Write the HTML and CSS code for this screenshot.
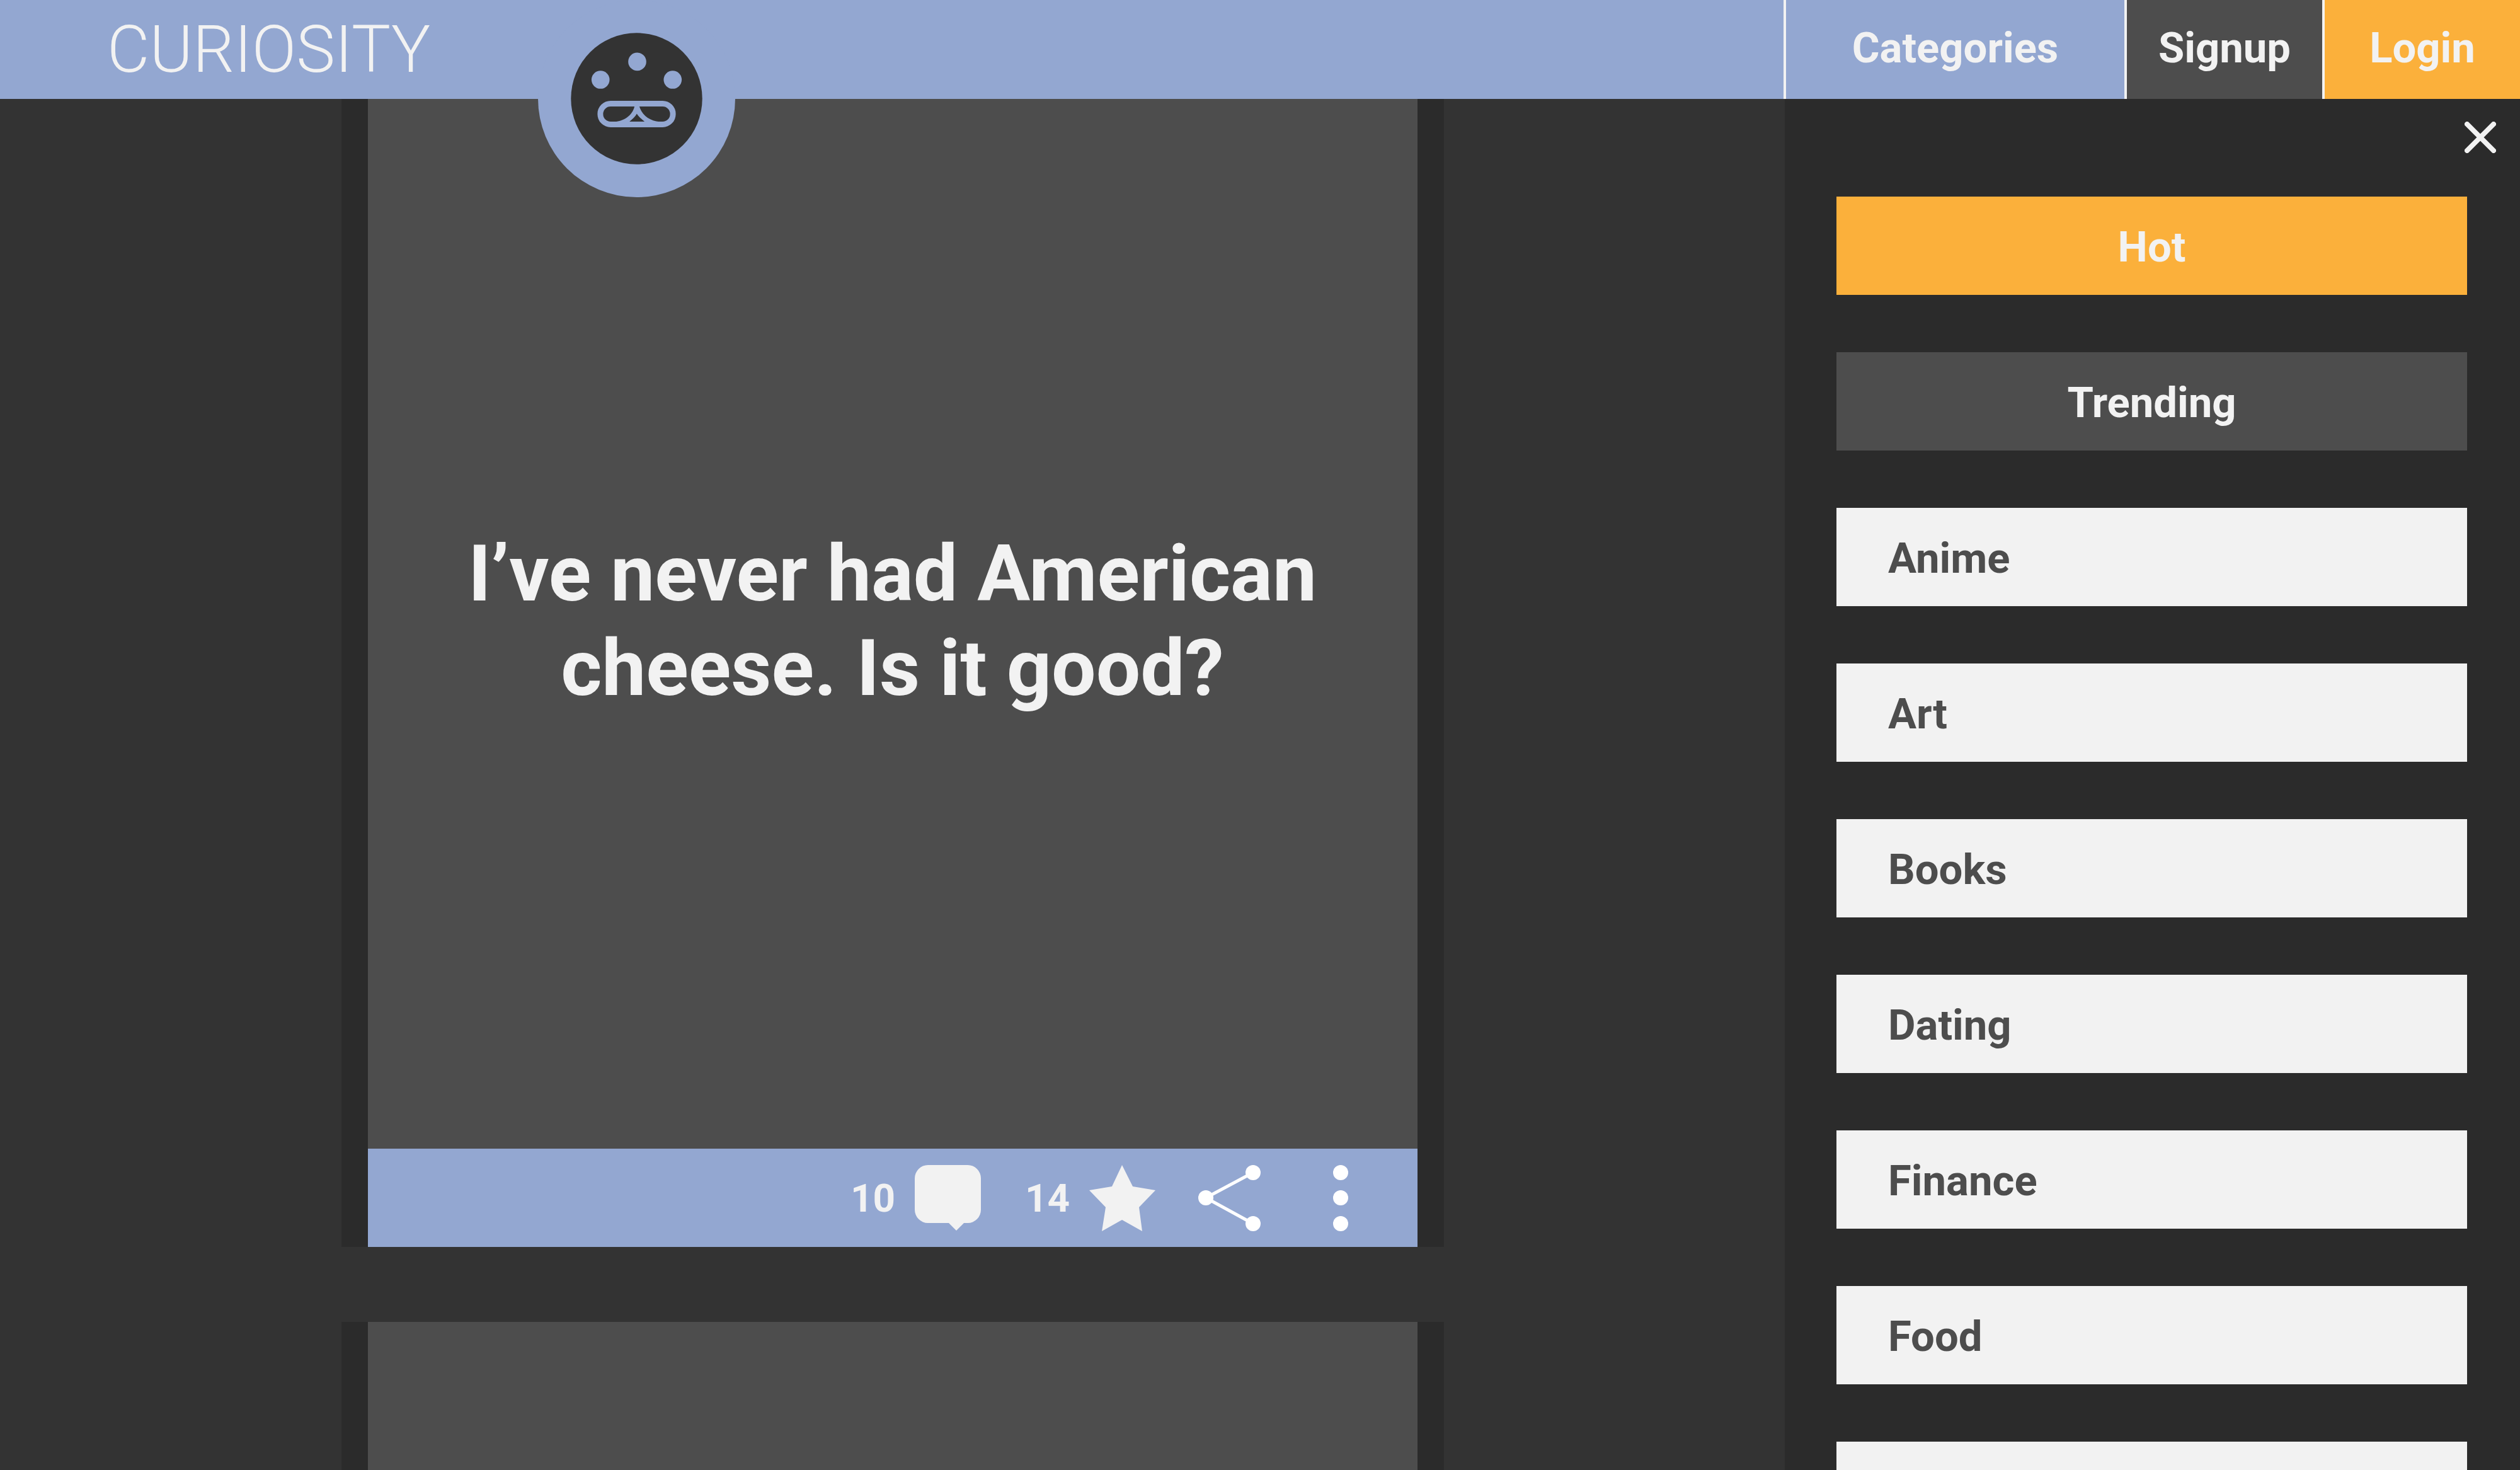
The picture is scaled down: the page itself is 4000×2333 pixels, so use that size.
FILE: index.html
```html
<!DOCTYPE html>
<html lang="en">
<head>
  <meta charset="utf-8">
  <meta name="viewport" content="width=device-width, initial-scale=1">
  <title>Curiosity</title>
  <link rel="stylesheet" href="styles.css">
</head>
<body>
  <header class="topbar">
    <a class="brand" href="#">CURIOSITY</a>
    <a class="mascot" href="#" aria-label="Home">
      <svg class="mascot-art" viewBox="101 -61 940 940" aria-hidden="true">
        <circle cx="571" cy="409" r="470" fill="#93a7d1"/>
        <circle cx="571" cy="409" r="313" fill="#333"/>
        <g fill="#93a7d1">
          <circle cx="574" cy="233" r="43"/>
          <circle cx="399" cy="319" r="43"/>
          <circle cx="743" cy="319" r="43"/>
          <path d="M561 446C552 490 505 519 468 519H536C550 508 564 495 572 481C581 495 595 508 610 519H680C635 516 596 488 584 446Z"/>
        </g>
        <rect x="398" y="433" width="346" height="99" rx="49" fill="none" stroke="#93a7d1" stroke-width="27"/>
      </svg>
    </a>
    <nav class="topnav">
      <button class="topnav-item topnav-categories" type="button">Categories</button>
      <a class="topnav-item topnav-signup" href="#">Signup</a>
      <a class="topnav-item topnav-login" href="#">Login</a>
    </nav>
  </header>

  <div class="layout">
    <main class="feed">
      <article class="post">
        <div class="post-body"><h2 class="post-title">I’ve never had American cheese. Is it good?</h2></div>
        <footer class="post-actions">
          <button class="action" type="button" aria-label="10 comments">
            <span class="count">10</span>
            <svg class="icon" viewBox="0 0 105 105" aria-hidden="true"><path fill="#f2f2f2" d="M21 0H84A21 21 0 0 1 105 21V71A21 21 0 0 1 84 92H78L66 104L54 92H21A21 21 0 0 1 0 71V21A21 21 0 0 1 21 0Z"/></svg>
          </button>
          <button class="action" type="button" aria-label="14 stars">
            <span class="count">14</span>
            <svg class="icon" viewBox="0 0 105 105" aria-hidden="true"><path fill="#f2f2f2" d="M52 0L69 34L105 40L79 67L84 105L52 87L20 105L26 67L0 40L36 34Z"/></svg>
          </button>
          <button class="action" type="button" aria-label="Share">
            <svg class="icon" viewBox="0 0 105 105" aria-hidden="true"><path d="M87 12L12 52L87 93" fill="none" stroke="#fff" stroke-width="5"/><g fill="#fff"><circle cx="87" cy="12" r="12"/><circle cx="12" cy="52" r="12"/><circle cx="87" cy="93" r="12"/></g></svg>
          </button>
          <button class="action" type="button" aria-label="More">
            <svg class="icon" viewBox="0 0 105 105" aria-hidden="true"><g fill="#fff"><circle cx="53" cy="12" r="12"/><circle cx="53" cy="52" r="12"/><circle cx="53" cy="93" r="12"/></g></svg>
          </button>
        </footer>
      </article>
      <article class="post">
        <div class="post-body"></div>
      </article>
    </main>

    <aside class="sidebar">
      <button class="close" type="button" aria-label="Close">
        <svg class="close-art" viewBox="0 0 50 50" aria-hidden="true"><path d="M4 4L46 46M46 4L4 46" stroke="#f2f2f2" stroke-width="8" stroke-linecap="round"/></svg>
      </button>
      <nav class="categories" aria-label="Categories">
        <a class="category category-hot" href="#">Hot</a>
        <a class="category category-trending" href="#">Trending</a>
        <a class="category" href="#">Anime</a>
        <a class="category" href="#">Art</a>
        <a class="category" href="#">Books</a>
        <a class="category" href="#">Dating</a>
        <a class="category" href="#">Finance</a>
        <a class="category" href="#">Food</a>
        <a class="category" href="#"></a>
      </nav>
    </aside>
  </div>
</body>
</html>
```
FILE: styles.css
```css
* {
  box-sizing: border-box;
}

body {
  margin: 0;
  height: 100vh;
  overflow: hidden;
  display: flex;
  flex-direction: column;
  background: #333;
  color: #f2f2f2;
  font-family: Roboto, "Liberation Sans", sans-serif;
  font-size: 67px;
  font-weight: 700;
}

a {
  color: inherit;
  text-decoration: none;
}

button {
  margin: 0;
  padding: 0;
  border: 0;
  background: none;
  color: inherit;
  font: inherit;
  cursor: pointer;
}

svg {
  display: block;
}

/* Top bar */
.topbar {
  flex: none;
  display: flex;
  height: 157px;
  padding-left: 170px;
  background: #93a7d1;
  z-index: 1;
}

.brand {
  align-self: center;
  font-size: 104px;
  font-weight: 300;
}

.mascot {
  margin-left: 171px;
}

.mascot-art {
  width: 313px;
  height: 313px;
}

.topnav {
  display: flex;
  margin-left: auto;
}

.topnav-item {
  display: flex;
  align-items: center;
  justify-content: center;
  width: 314px;
  padding-bottom: 5px;
  border-left: 4px solid #f2f2f2;
}

.topnav-categories {
  width: 541px;
}

.topnav-signup {
  background: #4d4d4d;
}

.topnav-login {
  background: #fbb03b;
}

/* Columns */
.layout {
  flex: 1;
  display: flex;
  min-height: 0;
}

.feed {
  flex: 1;
  display: flex;
  flex-direction: column;
  align-items: center;
  gap: 119px;
  overflow: hidden;
}

/* Posts */
.post {
  flex: none;
  width: 100%;
  max-width: 1750px;
  padding: 0 42px;
  background: #2b2b2b;
}

.post-body {
  display: flex;
  align-items: center;
  justify-content: center;
  aspect-ratio: 1;
  padding: 0 120px 8px;
  background: #4d4d4d;
}

.post-title {
  margin: 0;
  font-size: 125px;
  line-height: 150px;
  text-align: center;
}

.post-actions {
  display: flex;
  align-items: center;
  justify-content: flex-end;
  gap: 68px;
  height: 156px;
  padding-right: 70px;
  background: #93a7d1;
}

.action {
  display: flex;
  align-items: center;
  gap: 28px;
}

.count {
  min-width: 76px;
  font-size: 62px;
  text-align: center;
}

.icon {
  width: 105px;
  height: 105px;
}

/* Category panel */
.sidebar {
  flex: none;
  display: flex;
  flex-direction: column;
  width: 1167px;
  padding: 36px 38px 0 82px;
  background: #2b2b2b;
  overflow: hidden;
}

.close {
  align-self: flex-end;
}

.close-art {
  width: 50px;
  height: 50px;
}

.categories {
  display: grid;
  gap: 91px;
  padding: 69px 46px 0 0;
}

.category {
  display: flex;
  align-items: center;
  height: 156px;
  padding: 3px 82px 0;
  background: #f2f2f2;
  color: #4d4d4d;
}

.category-hot,
.category-trending {
  justify-content: center;
  color: #f2f2f2;
}

.category-hot {
  background: #fbb03b;
}

.category-trending {
  background: #4d4d4d;
}
```
